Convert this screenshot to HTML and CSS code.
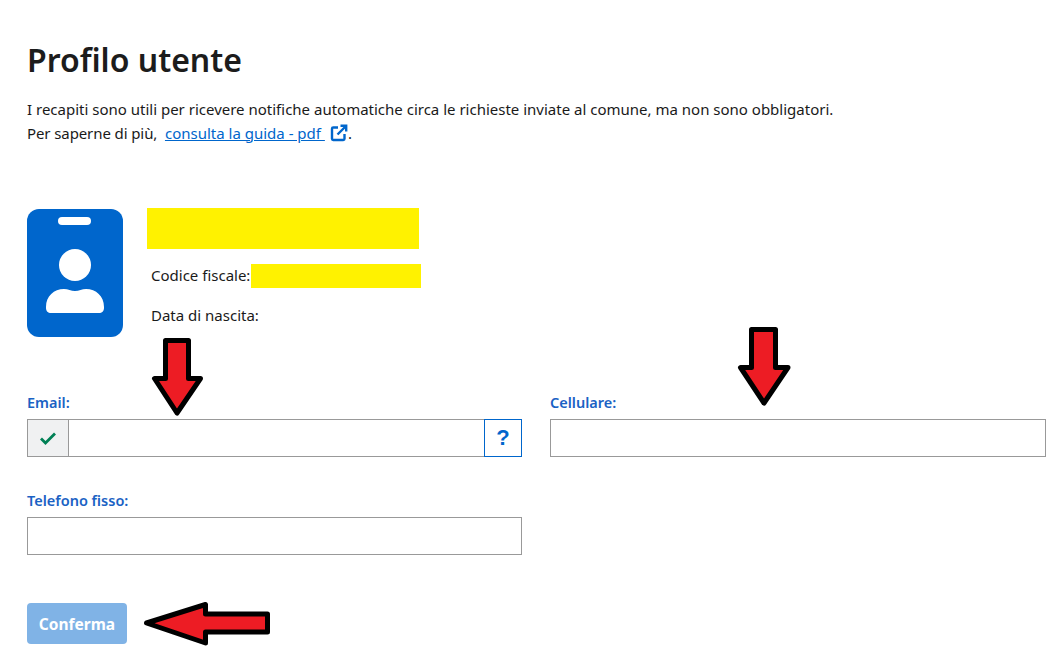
FILE: index.html
```html
<!DOCTYPE html>
<html lang="it">
<head>
<meta charset="utf-8">
<title>Profilo utente</title>
<link rel="stylesheet" href="styles.css">
</head>
<body>
<main class="page">
  <h1 class="title">Profilo utente</h1>
  <p class="intro">I recapiti sono utili per ricevere notifiche automatiche circa le richieste inviate al comune, ma non sono obbligatori.<br>
  <span class="lead">Per saperne di più,&nbsp;</span> <a href="#" class="link">consulta la guida - pdf&nbsp;</a><svg class="ext" viewBox="0 0 18 18" width="18" height="18"><path d="M8 3.500H3.200A1.200 1.200 0 0 0 2 4.700v10.100A1.200 1.200 0 0 0 3.200 16h10.100a1.200 1.200 0 0 0 1.200-1.200V10" fill="none" stroke="#0066cc" stroke-width="2.400"/><path d="M7.500 10.500 15.500 2.500M10.500 1.800h5.700v5.700" fill="none" stroke="#0066cc" stroke-width="2.400"/></svg>.</p>

  <section class="profile">
    <svg class="badge" viewBox="0 0 96 128" width="96" height="128">
      <rect width="96" height="128" rx="12" fill="#0066cc"/>
      <rect x="31" y="8" width="33" height="8" rx="4" fill="#fff"/>
      <circle cx="48" cy="56" r="16" fill="#fff"/>
      <path d="M19 98c0-11 8-18 18-18 4 0 7 2 11 2s7-2 11-2c10 0 18 7 18 18v1c0 3-2 5-5 5H24c-3 0-5-2-5-5z" fill="#fff"/>
    </svg>
    <div class="info">
      <div class="redact redact-name"></div>
      <div class="row row-cf"><span class="cf-label">Codice fiscale:</span><span class="redact redact-cf"></span></div>
      <div class="row row-dob">Data di nascita:</div>
    </div>
  </section>

  <form class="form">
    <div class="field">
      <label class="label">Email:</label>
      <div class="group">
        <span class="addon"><svg viewBox="0 0 16 16" width="16" height="16"><path d="M1 8.500 5.500 13 15 3.500" fill="none" stroke="#008055" stroke-width="2.800"/></svg></span>
        <input class="input input-grouped" type="text">
        <span class="help">?</span>
      </div>
    </div>
    <div class="field">
      <label class="label">Cellulare:</label>
      <input class="input" type="text">
    </div>
    <div class="field">
      <label class="label">Telefono fisso:</label>
      <input class="input" type="text">
    </div>
  </form>

  <button class="submit" type="button" disabled>Conferma</button>
</main>

<svg class="arrows" viewBox="0 0 1059 657" width="1059" height="657">
  <g fill="#ed1c24" stroke="#000" stroke-width="5" stroke-linejoin="round">
    <path d="M165.500 340.500h23v38h12L177 413 154.500 378.500h11z"/>
    <path d="M751.500 329.500h24v38h12.500L764 403 740.500 367.500h11z"/>
    <path d="M146.500 623 205.500 604.500v9.500h62v18h-62v11z"/>
  </g>
</svg>
</body>
</html>
```
FILE: styles.css
```css
* { box-sizing: border-box; }
html, body { margin: 0; padding: 0; background: #fff; }
body {
  position: relative;
  width: 1059px;
  height: 657px;
  overflow: hidden;
  font-family: "Noto Sans", "Open Sans", sans-serif;
  font-size: 15px;
  line-height: 24px;
  color: #1a1a1a;
}
.page { padding: 37px 13px 0 27px; }
.title {
  margin: 0;
  font-family: "Noto Sans", sans-serif;
  font-size: 32px;
  line-height: 46px;
  font-weight: 600;
  color: #1c1c1c;
}
.intro { margin: 15px 0 0; line-height: 23.500px; }
.lead { letter-spacing: -0.100px; }
.link { color: #0066cc; text-decoration: underline; }
.ext { vertical-align: -3px; margin-left: 5px; }

.profile { display: flex; gap: 24px; margin-top: 63px; }
.badge { margin-top: 1px; flex: none; }
.redact { background: #fff200; }
.redact-name { width: 272px; height: 41px; }
.row { padding-left: 4px; }
.row-cf { display: flex; align-items: center; margin-top: 15px; height: 24px; }
.cf-label { padding-bottom: 2px; }
.redact-cf { display: block; width: 170px; height: 24px; margin-left: 1px; }
.row-dob { margin-top: 15px; }

.form {
  display: grid;
  grid-template-columns: 495px 496px;
  column-gap: 28px;
  row-gap: 32px;
  margin-top: 54px;
}
.label {
  display: block;
  height: 22px;
  line-height: 22px;
  font-size: 14.500px;
  font-weight: 600;
  color: #1a62c4;
  margin-bottom: 6px;
}
.group { display: flex; height: 38px; }
.input {
  display: block;
  width: 100%;
  height: 38px;
  border: 1px solid #999;
  background: #fff;
  padding: 0 8px;
  border-radius: 0;
  outline: 0;
}
.input-grouped { flex: 1; min-width: 0; border-left: 0; border-right: 0; }
.addon {
  flex: none;
  width: 42px;
  display: flex;
  align-items: center;
  justify-content: center;
  background: #f0f1f2;
  border: 1px solid #999;
}
.help {
  flex: none;
  width: 38px;
  display: flex;
  align-items: center;
  justify-content: center;
  border: 1px solid #0066cc;
  color: #0066cc;
  font-family: "Liberation Sans", sans-serif;
  font-size: 22px;
  font-weight: 700;
}
.submit {
  display: block;
  width: 100px;
  height: 41px;
  margin-top: 48px;
  border: 0;
  border-radius: 4px;
  background: #80b3e6;
  color: #fff;
  font-family: "Noto Sans", sans-serif;
  font-size: 15.500px;
  font-weight: 700;
  padding: 0;
}
.arrows { position: absolute; left: 0; top: 0; pointer-events: none; }
```
